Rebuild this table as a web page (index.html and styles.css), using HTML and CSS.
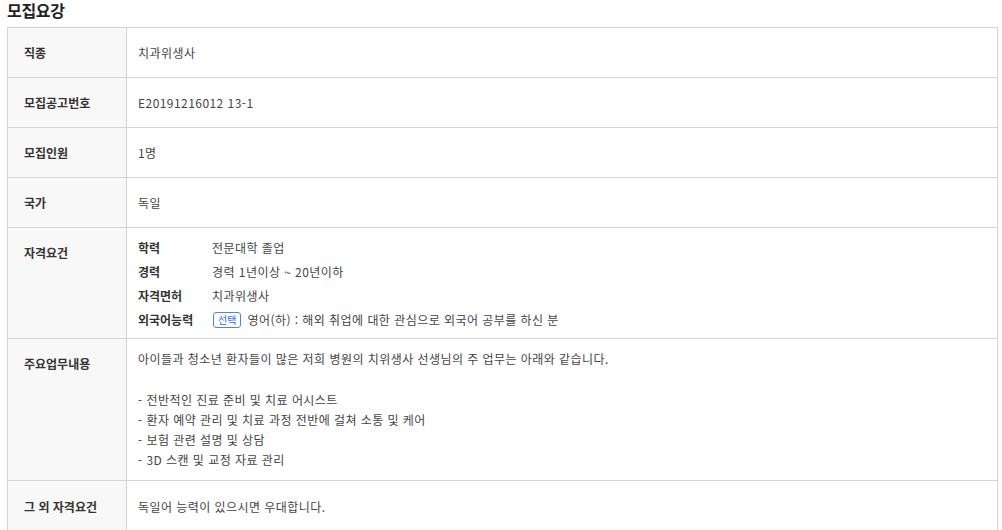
FILE: index.html
```html
<!DOCTYPE html>
<html lang="ko">
<head>
<meta charset="utf-8">
<link rel="stylesheet" href="styles.css">
</head>
<body>
<h2 class="title">모집요강</h2>
<table class="info">
  <tr><th>직종</th><td>치과위생사</td></tr>
  <tr><th>모집공고번호</th><td>E20191216012 13-1</td></tr>
  <tr><th>모집인원</th><td>1명</td></tr>
  <tr><th>국가</th><td>독일</td></tr>
  <tr><th>자격요건</th>
    <td class="multi">
      <dl class="req">
        <div class="req-row"><dt>학력</dt><dd>전문대학 졸업</dd></div>
        <div class="req-row"><dt>경력</dt><dd>경력 1년이상 ~ 20년이하</dd></div>
        <div class="req-row"><dt>자격면허</dt><dd>치과위생사</dd></div>
        <div class="req-row"><dt>외국어능력</dt><dd><span class="badge">선택</span>영어(하) : 해외 취업에 대한 관심으로 외국어 공부를 하신 분</dd></div>
      </dl>
    </td>
  </tr>
  <tr><th>주요업무내용</th>
    <td class="multi duty">
      <p>아이들과 청소년 환자들이 많은 저희 병원의 치위생사 선생님의 주 업무는 아래와 같습니다.</p>
      <p class="gap">- 전반적인 진료 준비 및 치료 어시스트</p>
      <p>- 환자 예약 관리 및 치료 과정 전반에 걸쳐 소통 및 케어</p>
      <p>- 보험 관련 설명 및 상담</p>
      <p>- 3D 스캔 및 교정 자료 관리</p>
    </td>
  </tr>
  <tr class="last"><th>그 외 자격요건</th><td>독일어 능력이 있으시면 우대합니다.</td></tr>
</table>
</body>
</html>
```
FILE: styles.css
```css
html, body {
  margin: 0;
  padding: 0;
  background: #fff;
}
body {
  padding: 0 5px 0 7px;
  font-family: "Noto Sans CJK KR", "Noto Sans", sans-serif;
  color: #444;
  font-size: 12px;
}
.title {
  margin: 0;
  height: 27px;
  font-size: 16px;
  line-height: 20px;
  font-weight: 700;
  color: #222;
  letter-spacing: -0.3px;
}
.info {
  width: 991px;
  border-collapse: collapse;
  border: 1px solid #d4d4d4;
  letter-spacing: 0.45px;
}
.info th, .info td {
  border-top: 1px solid #d4d4d4;
  vertical-align: top;
  line-height: 20px;
  height: 50px;
  box-sizing: border-box;
  text-align: left;
}
.info th {
  width: 119px;
  background: #f8f8f8;
  border-right: 1px solid #d4d4d4;
  padding: 15px 0 0 16px;
  font-weight: 700;
  color: #333;
  letter-spacing: 0;
}
.info td {
  padding: 15px 0 0 11px;
  color: #444;
}
.info td.multi {
  padding: 8px 0 6px 11px;
}
.info td.duty {
  padding: 10px 0 10px 11px;
}
.info tr.last th, .info tr.last td {
  padding-top: 16px;
  height: 60px;
}
.req {
  margin: 0;
}
.req-row {
  display: flex;
  align-items: center;
  height: 24px;
}
.req dt {
  width: 74px;
  font-weight: 700;
  color: #333;
  letter-spacing: 0;
}
.req dd {
  margin: 0;
  display: flex;
  align-items: center;
}
.badge {
  display: inline-block;
  border: 1px solid #4a86d9;
  border-radius: 3px;
  color: #2f6fd0;
  font-size: 10px;
  line-height: 14px;
  padding: 0 4px;
  margin: 0 6px 0 1px;
  letter-spacing: 0;
}
.duty p {
  margin: 0;
}
.duty p.gap {
  margin-top: 21px;
}
```
